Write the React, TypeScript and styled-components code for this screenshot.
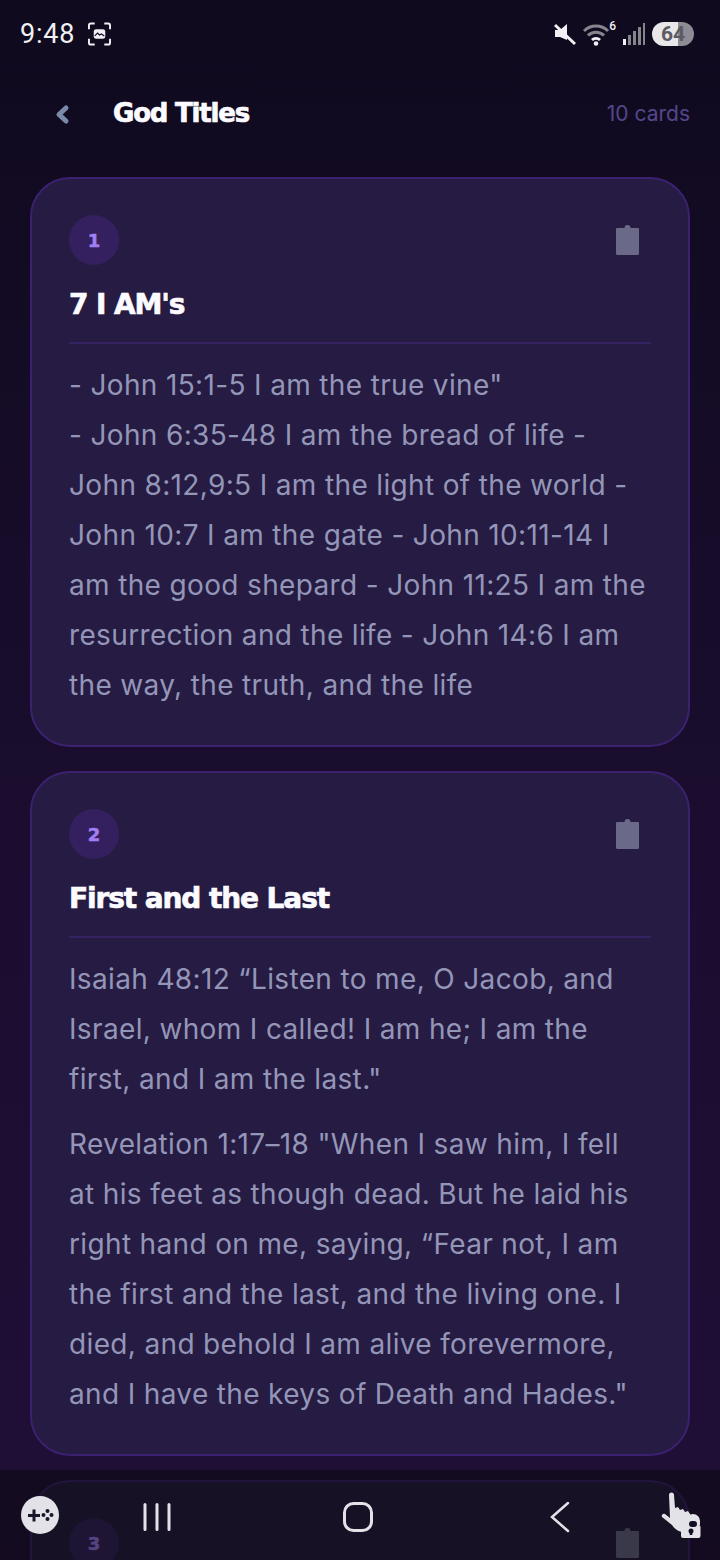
import styled, { createGlobalStyle } from "styled-components";

const GlobalStyle = createGlobalStyle`
  html, body {
    margin: 0;
    padding: 0;
    background: #0f0a1e;
  }
`;

const titleFont = `"DejaVu Sans", "Noto Sans", sans-serif`;

const cards = [
  {
    title: "7 I AM's",
    paragraphs: [
      [
        `- John 15:1-5 I am the true vine"`,
        "- John 6:35-48 I am the bread of life -",
        "John 8:12,9:5 I am the light of the world -",
        "John 10:7 I am the gate - John 10:11-14 I",
        "am the good shepard - John 11:25 I am the",
        "resurrection and the life - John 14:6 I am",
        "the way, the truth, and the life",
      ],
    ],
  },
  {
    title: "First and the Last",
    paragraphs: [
      [
        "Isaiah 48:12 “Listen to me, O Jacob, and",
        "Israel, whom I called! I am he; I am the",
        `first, and I am the last."`,
      ],
      [
        `Revelation 1:17–18 "When I saw him, I fell`,
        "at his feet as though dead. But he laid his",
        "right hand on me, saying, “Fear not, I am",
        "the first and the last, and the living one. I",
        "died, and behold I am alive forevermore,",
        `and I have the keys of Death and Hades."`,
      ],
    ],
  },
  { title: "", paragraphs: [] },
];

const Screen = styled.div`
  position: relative;
  width: 720px;
  height: 1560px;
  overflow: hidden;
  background: linear-gradient(180deg, #0f0a1e 0%, #1a0d2e 50%, #200f38 100%);
  font-family: "Inter", sans-serif;
`;

const StatusBar = styled.div`
  height: 68px;
  padding: 0 26px 0 20px;
  box-sizing: border-box;
  display: flex;
  align-items: center;
  justify-content: space-between;
  color: #f1f0f4;
`;

const StatusGroup = styled.div`
  display: flex;
  align-items: center;
  gap: 7px;
`;

const ClockGroup = styled(StatusGroup)`
  gap: 13px;
`;

const Clock = styled.span`
  font-family: "Roboto", sans-serif;
  font-size: 27px;
  letter-spacing: 0.8px;
`;

const Wifi = styled.div`
  position: relative;
  width: 33px;
  height: 24px;
`;

const WifiBadge = styled.span`
  position: absolute;
  top: -3px;
  right: 0;
  font-family: "Roboto", sans-serif;
  font-size: 12px;
  line-height: 14px;
  font-weight: 500;
`;

const Battery = styled.div`
  width: 42px;
  height: 24px;
  border-radius: 12px;
  display: flex;
  align-items: center;
  justify-content: center;
  background: linear-gradient(90deg, #e8e7ea 0 62%, #8d8b93 62% 100%);
  color: #5c5a62;
  font-family: "Roboto", sans-serif;
  font-size: 21px;
  font-weight: 700;
`;

const Header = styled.header`
  height: 90px;
  padding: 0 30px 0 52px;
  display: flex;
  align-items: center;
`;

const HeaderTitle = styled.h1`
  margin: 0 0 0 39px;
  flex: 1;
  color: #fbfbff;
  font-family: ${titleFont};
  font-size: 26px;
  font-weight: 700;
  letter-spacing: -1.2px;
  -webkit-text-stroke: 0.7px #fbfbff;
`;

const CardCount = styled.span`
  color: #54478a;
  font-size: 21px;
`;

const CardList = styled.div`
  display: flex;
  flex-direction: column;
  gap: 24px;
  padding: 19px 30px 0;
`;

const Card = styled.article`
  box-sizing: border-box;
  border: 2px solid #3b2170;
  border-radius: 40px;
  background: #261b42;
  padding: 36px 37px 35px;
`;

const CardTop = styled.div`
  display: flex;
  align-items: center;
  justify-content: space-between;
  padding-right: 12px;
`;

const Badge = styled.div`
  width: 50px;
  height: 50px;
  border-radius: 50%;
  background: #35205f;
  color: #a27ef5;
  display: flex;
  align-items: center;
  justify-content: center;
  font-family: ${titleFont};
  font-size: 18px;
  font-weight: 700;
  -webkit-text-stroke: 0.5px #a27ef5;
`;

const CardTitle = styled.h2`
  margin: 19px 0 0;
  padding-bottom: 17px;
  border-bottom: 2px solid #352260;
  color: #fbfbff;
  font-family: ${titleFont};
  font-size: 28px;
  line-height: 41px;
  font-weight: 700;
  letter-spacing: -1.1px;
  -webkit-text-stroke: 0.7px #fbfbff;
`;

const CardBody = styled.div`
  margin-top: 16px;
  color: #9496b8;
  font-size: 28px;
  line-height: 50px;
  letter-spacing: 0.35px;
`;

const Paragraph = styled.p`
  margin: 0 0 15px;
  white-space: nowrap;

  &:last-child {
    margin-bottom: 0;
  }
`;

const Line = styled.span`
  display: block;
`;

const NavBar = styled.nav`
  position: absolute;
  left: 0;
  right: 0;
  bottom: 0;
  height: 90px;
  background: rgba(8, 7, 10, 0.5);
  display: flex;
  align-items: center;
  justify-content: space-between;
  padding: 0 19px 0 20px;
  box-sizing: border-box;
`;

const NavIcons = styled.div`
  display: flex;
  align-items: center;
  gap: 172px;
  margin-right: auto;
  padding: 4px 0 0 83px;
`;

const Clipboard = () => (
  <svg width="23" height="30" viewBox="0 0 23 30" fill="#6a6a88">
    <path d="M1 3h7.500a3 3 0 0 1 6 0H22a1 1 0 0 1 1 1v24.500a1.500 1.500 0 0 1-1.500 1.500h-20A1.500 1.500 0 0 1 0 28.500V4a1 1 0 0 1 1-1z" />
  </svg>
);

const App = () => (
  <Screen>
    <GlobalStyle />
    <StatusBar>
      <ClockGroup>
        <Clock>9:48</Clock>
        <svg width="23" height="24" viewBox="0 0 24 24" fill="none" stroke="#f1f0f4" strokeWidth="2">
          <path d="M1 7V3a2 2 0 0 1 2-2h4M17 1h4a2 2 0 0 1 2 2v4M23 17v4a2 2 0 0 1-2 2h-4M7 23H3a2 2 0 0 1-2-2v-4" />
          <rect x="6" y="7" width="12" height="10" rx="2.500" fill="#f1f0f4" stroke="none" />
          <path d="M7 14l3-3 2 2 2-1 3 2" stroke="#0f0a1e" strokeWidth="1.200" />
        </svg>
      </ClockGroup>
      <StatusGroup>
        <svg width="22" height="24" viewBox="0 0 22 24" fill="#f1f0f4">
          <path d="M1 8h5l7-6v16L6 15H1z" />
          <path d="M1 3l20 19" stroke="#f1f0f4" strokeWidth="3" />
        </svg>
        <Wifi>
          <svg width="27" height="24" viewBox="0 0 27 24" fill="none">
            <path d="M1 9a17 17 0 0 1 24 0M5 13.500a11.500 11.500 0 0 1 16 0" stroke="#87858c" strokeWidth="3" />
            <path d="M9 18a6 6 0 0 1 8 0" stroke="#f1f0f4" strokeWidth="3" />
            <circle cx="13" cy="21.500" r="2.300" fill="#f1f0f4" />
          </svg>
          <WifiBadge>6</WifiBadge>
        </Wifi>
        <svg width="22" height="24" viewBox="0 0 22 24" fill="#87858c">
          <rect x="0" y="17" width="3" height="6" fill="#f1f0f4" />
          <rect x="5" y="13" width="3" height="10" />
          <rect x="10" y="9" width="3" height="14" />
          <rect x="15" y="5" width="3" height="18" />
          <rect x="20" y="1" width="2" height="22" />
        </svg>
        <Battery>64</Battery>
      </StatusGroup>
    </StatusBar>
    <Header>
      <svg width="22" height="24" viewBox="0 0 22 24" fill="none" stroke="#7b8aa8" strokeWidth="5" strokeLinecap="round" strokeLinejoin="round">
        <path d="M14 7l-7 6.500 7 6.500" />
      </svg>
      <HeaderTitle>God Titles</HeaderTitle>
      <CardCount>10 cards</CardCount>
    </Header>
    <CardList>
      {cards.map((card, i) => (
        <Card key={i}>
          <CardTop>
            <Badge>{i + 1}</Badge>
            <Clipboard />
          </CardTop>
          <CardTitle>{card.title}</CardTitle>
          <CardBody>
            {card.paragraphs.map((lines, j) => (
              <Paragraph key={j}>
                {lines.map((line) => (
                  <Line key={line}>{line}</Line>
                ))}
              </Paragraph>
            ))}
          </CardBody>
        </Card>
      ))}
    </CardList>
    <NavBar>
      <svg width="40" height="40" viewBox="0 0 40 40">
        <circle cx="20" cy="20" r="19" fill="#e3e2e8" />
        <path d="M8 20.500h12M14 14.500v12" stroke="#1a1528" strokeWidth="3" />
        <circle cx="27.500" cy="16" r="2" fill="#1a1528" />
        <circle cx="27.500" cy="24" r="2" fill="#1a1528" />
        <circle cx="23.500" cy="20" r="2" fill="#1a1528" />
        <circle cx="31.500" cy="20" r="2" fill="#1a1528" />
      </svg>
      <NavIcons>
        <svg width="28" height="28" viewBox="0 0 28 28" stroke="#e3e2e8" strokeWidth="3" strokeLinecap="round">
          <path d="M2 1.500v25M14 1.500v25M26 1.500v25" />
        </svg>
        <svg width="30" height="30" viewBox="0 0 30 30" fill="none" stroke="#e3e2e8" strokeWidth="3">
          <rect x="1.500" y="1.500" width="27" height="27" rx="9" />
        </svg>
        <svg width="26" height="32" viewBox="0 0 26 32" fill="none" stroke="#e3e2e8" strokeWidth="2.500" strokeLinecap="round">
          <path d="M23 2L7 16l16 14" />
        </svg>
      </NavIcons>
      <svg width="40" height="46" viewBox="0 0 40 46" fill="#e3e2e8">
        <path d="M8 3a2.500 2.500 0 0 1 5 0l1 13 3-1 2 3 3-1 2 3 3-1 2 3 1 5-9 13c-5-1-8-4-10-7L1 25c-1-2 1-4 3-3l5 4z" />
        <path d="M25 29a7 7 0 0 1 14 0v4h-1.500a2 2 0 0 1 2 2v9a2 2 0 0 1-2 2H22a2 2 0 0 1-2-2v-9a2 2 0 0 1 2-2H25z" />
        <rect x="28" y="29" width="8" height="6" rx="3" fill="#140e24" />
        <circle cx="30" cy="39" r="2.500" fill="#140e24" />
        <path d="M30 39v4" stroke="#140e24" strokeWidth="2.500" />
      </svg>
    </NavBar>
  </Screen>
);

export default App;
